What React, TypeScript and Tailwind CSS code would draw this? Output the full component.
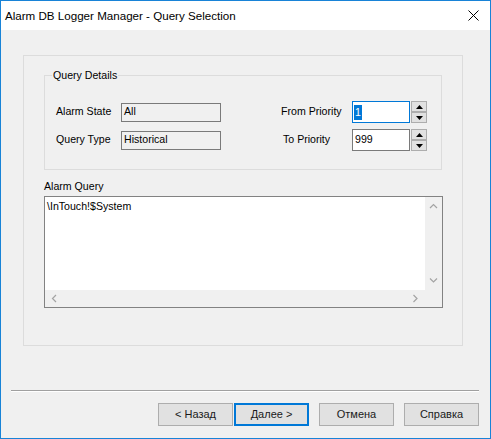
import React from "react";

const font = { fontFamily: '"Liberation Sans", Arial, sans-serif' };

function SpinButton({ up }: { up?: boolean }) {
  return (
    <div className="w-[16px] h-[11px] border border-[#adadad] bg-[#e1e1e1] flex items-center justify-center">
      <svg width="7" height="4" viewBox="0 0 7 4">
        {up ? <path d="M0 4 L3.5 0 L7 4 Z" fill="#000" /> : <path d="M0 0 L3.5 4 L7 0 Z" fill="#000" />}
      </svg>
    </div>
  );
}

function Spinner() {
  return (
    <div className="ml-[1px] flex flex-col">
      <SpinButton up />
      <SpinButton />
    </div>
  );
}

function Chevron({ dir }: { dir: "up" | "down" | "left" | "right" }) {
  const d = {
    up: "M1 5 L4.5 1.5 L8 5",
    down: "M1 1.5 L4.5 5 L8 1.5",
    left: "M5 1 L1.5 4.5 L5 8",
    right: "M1.5 1 L5 4.5 L1.5 8",
  }[dir];
  const vertical = dir === "up" || dir === "down";
  return (
    <svg width={vertical ? 9 : 7} height={vertical ? 7 : 9} viewBox={vertical ? "0 0 9 7" : "0 0 7 9"}>
      <path d={d} fill="none" stroke="#a3a3a3" strokeWidth="1.2" />
    </svg>
  );
}

function Button({ label, focused }: { label: string; focused?: boolean }) {
  return (
    <div
      className={
        "w-[75px] h-[23px] bg-[#e1e1e1] flex items-center justify-center text-[11px] text-[#1a1a1a] " +
        (focused ? "border-2 border-[#0078d7]" : "border border-[#adadad]")
      }
    >
      {label}
    </div>
  );
}

export default function App() {
  return (
    <div
      className="w-[491px] h-[439px] border border-[#1883d7] bg-[#f0f0f0] flex flex-col overflow-hidden text-black"
      style={font}
    >
      {/* title bar */}
      <div className="h-[29px] bg-white flex items-center shrink-0">
        <span className="pl-[4px] text-[11.6px]">Alarm DB Logger Manager - Query Selection</span>
        <svg className="ml-auto mr-[11px]" width="11" height="11" viewBox="0 0 11 11">
          <path d="M0.5 0.5 L10.5 10.5 M10.5 0.5 L0.5 10.5" stroke="#000" strokeWidth="1" />
        </svg>
      </div>

      {/* body */}
      <div className="flex-1 flex flex-col">
        <div className="mt-[25px] ml-[22px] w-[440px] h-[291px] border border-[#dcdcdc] flex flex-col">
          {/* Query Details group */}
          <div className="relative mt-[19px] ml-[20px] w-[398px] h-[95px] border border-[#dcdcdc] text-[10.6px]">
            <span className="absolute -top-[8px] left-[7px] px-[1px] bg-[#f0f0f0] leading-[14px]">Query Details</span>
            <div className="flex flex-col gap-[6px] pt-[25px]">
              <div className="flex items-center h-[22px]">
                <span className="ml-[11px] w-[65px]">Alarm State</span>
                <div className="w-[100px] h-[19px] border border-[#7a7a7a] bg-[#f0f0f0] flex items-center pl-[2px]">All</div>
                <span className="ml-[60px] w-[71px]">From Priority</span>
                <div className="w-[58px] h-[22px] border border-[#0078d7] bg-white flex items-center pl-[1px]">
                  <span className="bg-[#0078d7] text-white px-[1px] leading-[15px]">1</span>
                </div>
                <Spinner />
              </div>
              <div className="flex items-center h-[22px]">
                <span className="ml-[11px] w-[65px]">Query Type</span>
                <div className="w-[100px] h-[19px] border border-[#7a7a7a] bg-[#f0f0f0] flex items-center pl-[2px]">Historical</div>
                <span className="ml-[60px] w-[71px] pl-[2px]">To Priority</span>
                <div className="w-[58px] h-[22px] border border-[#7a7a7a] bg-white flex items-center pl-[2px]">999</div>
                <Spinner />
              </div>
            </div>
          </div>

          {/* Alarm Query */}
          <span className="mt-[9px] ml-[20px] text-[10.6px] leading-[14px]">Alarm Query</span>
          <div className="mt-[3px] ml-[20px] w-[399px] h-[112px] border border-[#828282] flex flex-col text-[10.6px]">
            <div className="flex flex-1">
              <div className="flex-1 bg-white pl-[2px] pt-[2px]">\InTouch!$System</div>
              <div className="w-[17px] bg-[#f0f0f0] flex flex-col items-center justify-between py-[6px]">
                <Chevron dir="up" />
                <Chevron dir="down" />
              </div>
            </div>
            <div className="h-[17px] flex bg-[#f0f0f0]">
              <div className="flex-1 flex items-center justify-between px-[6px]">
                <Chevron dir="left" />
                <Chevron dir="right" />
              </div>
              <div className="w-[17px]" />
            </div>
          </div>
        </div>

        {/* separator */}
        <div className="mt-[44px] ml-[10px] w-[468px] border-t border-[#a0a0a0] border-b border-b-white" />

        {/* buttons */}
        <div className="mt-[11px] ml-[157px] flex">
          <Button label="< Назад" />
          <div className="ml-[1px]">
            <Button label="Далее >" focused />
          </div>
          <div className="ml-[10px]">
            <Button label="Отмена" />
          </div>
          <div className="ml-[10px]">
            <Button label="Справка" />
          </div>
        </div>
      </div>
    </div>
  );
}
